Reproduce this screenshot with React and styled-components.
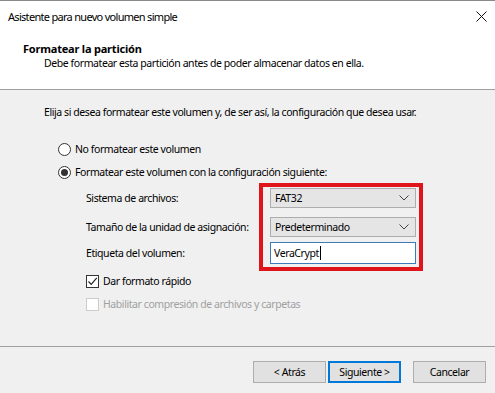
import React from "react";
import styled, { createGlobalStyle, css } from "styled-components";

const Global = createGlobalStyle`
  html, body { margin: 0; padding: 0; background: #f0f0f0; }
  body {
    font-family: "Noto Sans", "Open Sans", sans-serif;
    font-size: 10.5px;
    letter-spacing: -0.42px;
    color: #000;
  }
  * { box-sizing: border-box; }
`;

const Window = styled.div`
  width: 495px;
  height: 393px;
  background: #f0f0f0;
  border-top: 1px solid #8a8a8a;
  display: flex;
  flex-direction: column;
  overflow: hidden;
`;

const TitleBar = styled.div`
  height: 30px;
  background: #fff;
  display: flex;
  align-items: center;
  justify-content: space-between;
  padding: 0 8px 0 8px;
  font-size: 11px;
  letter-spacing: -0.7px;
`;

const CloseIcon = styled.svg`
  width: 11px;
  height: 11px;
`;

const Header = styled.div`
  height: 59px;
  background: #fff;
  border-bottom: 1px solid #a0a0a0;
  padding: 10px 0 0 23px;
  display: flex;
  flex-direction: column;
`;

const HeaderTitle = styled.div`
  font-weight: 700;
  font-size: 11px;
  letter-spacing: -0.2px;
  line-height: 15px;
`;

const HeaderSub = styled.div`
  padding-left: 21px;
  line-height: 15px;
`;

const Body = styled.div`
  flex: 1;
  padding: 14px 0 0 44px;
  display: flex;
  flex-direction: column;
`;

const Intro = styled.div`
  line-height: 16px;
  margin-bottom: 21px;
`;

const OptionRow = styled.label`
  display: flex;
  align-items: center;
  gap: 4px;
  height: 16px;
  white-space: nowrap;
  margin-left: ${(p) => p.$indent || 14}px;
  margin-bottom: ${(p) => p.$mb || 0}px;
  color: ${(p) => (p.$disabled ? "#a0a0a0" : "#000")};
`;

const RadioCircle = styled.span`
  width: 13px;
  height: 13px;
  border-radius: 50%;
  border: 1px solid #333;
  background: #fff;
  display: flex;
  align-items: center;
  justify-content: center;
  &::after {
    content: "";
    width: 7px;
    height: 7px;
    border-radius: 50%;
    background: #333;
    display: ${(p) => (p.$checked ? "block" : "none")};
  }
`;

const CheckBox = styled.span`
  width: 13px;
  height: 13px;
  border: 1px solid ${(p) => (p.$disabled ? "#cccccc" : "#333")};
  background: #fff;
  display: flex;
  align-items: center;
  justify-content: center;
`;

const Fields = styled.div`
  display: flex;
  margin-left: 42px;
  margin-top: 3px;
`;

const LabelCol = styled.div`
  width: 173px;
  padding-top: 5px;
  display: flex;
  flex-direction: column;
`;

const FieldLabel = styled.div`
  height: ${(p) => p.$h}px;
  margin-bottom: ${(p) => p.$mb || 0}px;
  display: flex;
  align-items: center;
  white-space: nowrap;
`;

const Highlight = styled.div`
  width: 164px;
  border: 4.5px solid #e0141b;
  padding: 1px 3px 3px 7px;
  display: flex;
  flex-direction: column;
`;

const Select = styled.div`
  height: 20px;
  margin-bottom: ${(p) => p.$mb || 0}px;
  background: #e5e5e5;
  border: 1px solid #adadad;
  display: flex;
  align-items: center;
  justify-content: space-between;
  padding: 0 6px 0 4px;
`;

const Input = styled.div`
  height: 22px;
  background: #fff;
  border: 1px solid #3d7ab8;
  display: flex;
  align-items: center;
  padding-left: 3px;
`;

const Caret = styled.span`
  display: inline-block;
  width: 1px;
  height: 14px;
  background: #000;
  margin-left: 1px;
`;

const Checks = styled.div`
  margin-top: 2px;
  display: flex;
  flex-direction: column;
`;

const Footer = styled.div`
  height: 47px;
  border-top: 1px solid #a0a0a0;
  display: flex;
  justify-content: flex-end;
  align-items: flex-start;
  padding: 14px 9px 0 0;
`;

const Button = styled.div`
  width: 73px;
  height: 22px;
  background: #e1e1e1;
  border: 1px solid #adadad;
  display: flex;
  align-items: center;
  justify-content: center;
  margin-left: ${(p) => p.$ml || 0}px;
  ${(p) =>
    p.$default &&
    css`
      border: 2px solid #0078d7;
    `}
`;

const Chevron = () => (
  <svg width="10" height="6" viewBox="0 0 10 6">
    <path d="M0.5 0.5 L5 5 L9.5 0.5" fill="none" stroke="#444" strokeWidth="1" />
  </svg>
);

const Check = () => (
  <svg width="11" height="11" viewBox="0 0 11 11">
    <path d="M1.5 5.5 L4.2 8.3 L9.8 1.8" fill="none" stroke="#222" strokeWidth="1.2" />
  </svg>
);

export default function App() {
  return (
    <>
      <Global />
      <Window>
        <TitleBar>
          <span>Asistente para nuevo volumen simple</span>
          <CloseIcon viewBox="0 0 11 11">
            <path d="M0.5 0.5 L10.5 10.5 M10.5 0.5 L0.5 10.5" stroke="#111" strokeWidth="1" />
          </CloseIcon>
        </TitleBar>
        <Header>
          <HeaderTitle>Formatear la partición</HeaderTitle>
          <HeaderSub>Debe formatear esta partición antes de poder almacenar datos en ella.</HeaderSub>
        </Header>
        <Body>
          <Intro>
            Elija si desea formatear este volumen y, de ser así, la configuración que desea usar.
          </Intro>
          <OptionRow $mb={7}>
            <RadioCircle />
            No formatear este volumen
          </OptionRow>
          <OptionRow>
            <RadioCircle $checked />
            Formatear este volumen con la configuración siguiente:
          </OptionRow>
          <Fields>
            <LabelCol>
              <FieldLabel $h={20} $mb={9}>Sistema de archivos:</FieldLabel>
              <FieldLabel $h={20} $mb={5}>Tamaño de la unidad de asignación:</FieldLabel>
              <FieldLabel $h={22}>Etiqueta del volumen:</FieldLabel>
            </LabelCol>
            <Highlight>
              <Select $mb={9}>
                <span>FAT32</span>
                <Chevron />
              </Select>
              <Select $mb={5}>
                <span>Predeterminado</span>
                <Chevron />
              </Select>
              <Input>
                VeraCrypt
                <Caret />
              </Input>
            </Highlight>
          </Fields>
          <Checks>
            <OptionRow $indent={42} $mb={7}>
              <CheckBox>
                <Check />
              </CheckBox>
              Dar formato rápido
            </OptionRow>
            <OptionRow $indent={42} $disabled>
              <CheckBox $disabled />
              Habilitar compresión de archivos y carpetas
            </OptionRow>
          </Checks>
        </Body>
        <Footer>
          <Button>&lt; Atrás</Button>
          <Button $default $ml={2}>Siguiente &gt;</Button>
          <Button $ml={12}>Cancelar</Button>
        </Footer>
      </Window>
    </>
  );
}
